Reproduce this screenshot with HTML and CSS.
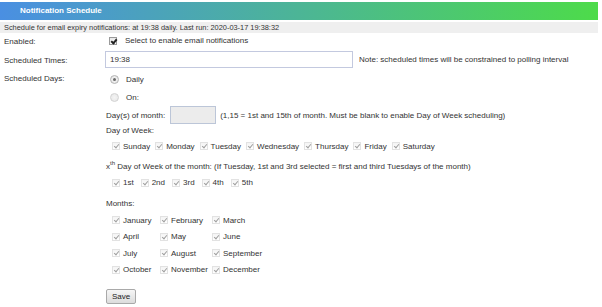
FILE: index.html
```html
<!DOCTYPE html>
<html lang="en">
<head>
    <meta charset="UTF-8">
    <meta name="viewport" content="width=device-width, initial-scale=1.0">
    <title>Notification Schedule</title>
    <link rel="stylesheet" href="styles.css">
</head>
<body>
    <div class="panel">
        <div class="panel-title">Notification Schedule</div>
        <div class="summary">Schedule for email expiry notifications: at 19:38 daily. Last run: 2020-03-17 19:38:32</div>

        <div class="row row-enabled">
            <div class="label">Enabled:</div>
            <div class="value">
                <label class="check check-main"><input type="checkbox" checked>Select to enable email notifications</label>
            </div>
        </div>

        <div class="row row-times">
            <div class="label">Scheduled Times:</div>
            <div class="value">
                <input type="text" class="text-input times-input" value="19:38">
                <span class="note">Note: scheduled times will be constrained to polling interval</span>
            </div>
        </div>

        <div class="row row-days">
            <div class="label">Scheduled Days:</div>
            <div class="value days">
                <label class="radio-line"><input type="radio" name="mode" checked disabled>Daily</label>
                <label class="radio-line"><input type="radio" name="mode" disabled>On:</label>

                <div class="month-day">
                    Day(s) of month:
                    <input type="text" class="text-input dom-input" disabled>
                    <span>(1,15 = 1st and 15th of month. Must be blank to enable Day of Week scheduling)</span>
                </div>

                <div class="sub-title">Day of Week:</div>
                <div class="check-row">
                    <label class="check"><input type="checkbox" checked disabled>Sunday</label>
                    <label class="check"><input type="checkbox" checked disabled>Monday</label>
                    <label class="check"><input type="checkbox" checked disabled>Tuesday</label>
                    <label class="check"><input type="checkbox" checked disabled>Wednesday</label>
                    <label class="check"><input type="checkbox" checked disabled>Thursday</label>
                    <label class="check"><input type="checkbox" checked disabled>Friday</label>
                    <label class="check"><input type="checkbox" checked disabled>Saturday</label>
                </div>

                <div class="sub-title nth-title">x<sup>th</sup> Day of Week of the month: (If Tuesday, 1st and 3rd selected = first and third Tuesdays of the month)</div>
                <div class="check-row nth-row">
                    <label class="check"><input type="checkbox" checked disabled>1st</label>
                    <label class="check"><input type="checkbox" checked disabled>2nd</label>
                    <label class="check"><input type="checkbox" checked disabled>3rd</label>
                    <label class="check"><input type="checkbox" checked disabled>4th</label>
                    <label class="check"><input type="checkbox" checked disabled>5th</label>
                </div>

                <div class="sub-title months-title">Months:</div>
                <div class="months">
                    <label class="check"><input type="checkbox" checked disabled>January</label>
                    <label class="check"><input type="checkbox" checked disabled>February</label>
                    <label class="check"><input type="checkbox" checked disabled>March</label>
                    <label class="check"><input type="checkbox" checked disabled>April</label>
                    <label class="check"><input type="checkbox" checked disabled>May</label>
                    <label class="check"><input type="checkbox" checked disabled>June</label>
                    <label class="check"><input type="checkbox" checked disabled>July</label>
                    <label class="check"><input type="checkbox" checked disabled>August</label>
                    <label class="check"><input type="checkbox" checked disabled>September</label>
                    <label class="check"><input type="checkbox" checked disabled>October</label>
                    <label class="check"><input type="checkbox" checked disabled>November</label>
                    <label class="check"><input type="checkbox" checked disabled>December</label>
                </div>

                <div class="actions">
                    <button class="save">Save</button>
                </div>
            </div>
        </div>
    </div>
</body>
</html>
```

FILE: styles.css
```css
body {
    margin: 0;
    font-family: "Liberation Sans", Arial, sans-serif;
    font-size: 8px;
    color: #333333;
    background: #ffffff;
}

.panel {
    width: 598px;
    padding-top: 2px;
}

.panel-title {
    height: 18px;
    line-height: 18px;
    padding-left: 20px;
    color: #ffffff;
    font-weight: bold;
    background: linear-gradient(to right, #4a8fe2 0%, #4cb596 50%, #4ddb4a 100%);
}

.summary {
    margin-top: 2px;
    height: 11px;
    line-height: 11px;
    padding-left: 4px;
    font-size: 7.4px;
    background-color: #efefef;
}

.row {
    display: flex;
}

.label {
    width: 106px;
    flex-shrink: 0;
    padding-left: 4px;
    box-sizing: border-box;
}

.value {
    flex: 1;
}

.row-enabled {
    margin-top: 3px;
    height: 12px;
    line-height: 12px;
    align-items: center;
}

.row-times {
    height: 22px;
    align-items: center;
}

.row-times .label {
    padding-top: 2px;
}

.row-times .value {
    display: flex;
    align-items: center;
}

.text-input {
    height: 17px;
    box-sizing: border-box;
    border: 1px solid #c3c9df;
    padding: 0 4px;
    font-family: inherit;
    font-size: 8px;
    color: #333333;
    outline: none;
}

.times-input {
    width: 248px;
    margin: 1px 0 0 -1px;
}

.note {
    margin-left: 6px;
}

.row-days .label {
    line-height: 16px;
    padding-top: 1px;
}

.days {
    display: flex;
    flex-direction: column;
}

.radio-line {
    display: flex;
    align-items: center;
    height: 18px;
    padding-left: 4px;
}

.month-day {
    display: flex;
    align-items: center;
    height: 18px;
}

.dom-input {
    width: 46px;
    height: 18px;
    margin: 0 4px 0 5px;
    background-color: #ececec;
    border-color: #bcc6d8;
}

.sub-title {
    height: 14px;
    line-height: 14px;
}

.nth-title {
    margin-top: 4px;
    height: 18px;
    line-height: 18px;
}

.nth-title sup {
    font-size: 6px;
    line-height: 0;
}

.months-title {
    margin-top: 8px;
}

.check-row {
    display: flex;
    align-items: center;
    height: 16px;
    padding-left: 6px;
    gap: 5px;
}

.nth-row {
    height: 13px;
    gap: 7px;
}

.months {
    display: grid;
    grid-template-columns: 48px 52px auto;
    grid-auto-rows: 16.5px;
    margin-top: 1px;
    padding-left: 6px;
}

.check {
    display: inline-flex;
    align-items: center;
}

/* checkbox and radio, drawn by hand */
input[type="checkbox"],
input[type="radio"] {
    appearance: none;
    -webkit-appearance: none;
    position: relative;
    flex-shrink: 0;
    width: 8px;
    height: 8px;
    margin: 0 3px 0 0;
    border: 1px solid #e2e2e2;
    background: linear-gradient(#f4f4f4, #ffffff);
    box-sizing: border-box;
}

input[type="checkbox"]:checked::after {
    content: "";
    position: absolute;
    left: 2px;
    top: 0;
    width: 2px;
    height: 4px;
    border-right: 1px solid #a0a0a0;
    border-bottom: 1px solid #a0a0a0;
    transform: rotate(40deg);
}

.check-main input[type="checkbox"] {
    margin: 0 8px 0 3px;
    border-color: #9a9a9a;
    background: linear-gradient(#e8e8e8, #fafafa);
}

.check-main input[type="checkbox"]:checked::after {
    border-color: #222222;
    border-width: 0 2px 2px 0;
    left: 1.5px;
    top: -0.5px;
}

input[type="radio"] {
    width: 9px;
    height: 9px;
    margin-right: 7px;
    border-radius: 50%;
    border-color: #d2d2d2;
    background: radial-gradient(#f4f4f4, #e6e6e6);
}

input[type="radio"]:checked {
    border-color: #b4b4b4;
}

input[type="radio"]:checked::after {
    content: "";
    position: absolute;
    left: 2px;
    top: 2px;
    width: 3px;
    height: 3px;
    border-radius: 50%;
    background-color: #6a6a6a;
}

.actions {
    margin-top: 11px;
}

.save {
    height: 15px;
    padding: 0 5px;
    font-family: inherit;
    font-size: 8px;
    color: #222222;
    border: 1px solid #a9a9a9;
    border-radius: 2px;
    background: linear-gradient(#f6f6f6, #dcdcdc);
}
```
